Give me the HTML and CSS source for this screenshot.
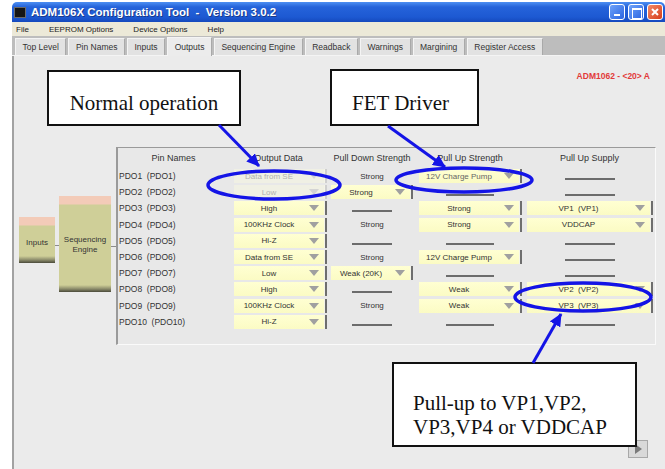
FILE: index.html
```html
<!DOCTYPE html>
<html>
  <head>
    <title>ADM106X Configuration Tool</title>
    <link rel="stylesheet" href="styles.css">
  </head>
  <body>
    <div class="window">
      <div class="titlebar">
        <span class="app-icon"></span>
        <span class="title">ADM106X Configuration Tool&nbsp; -&nbsp; Version 3.0.2</span>
        <div class="win-btns">
          <span class="wbtn min"></span>
          <span class="wbtn max"></span>
          <span class="wbtn close">
            <svg width="14" height="14" viewBox="0 0 14 14"><path d="M4 4 L10 10 M10 4 L4 10" stroke="#fff" stroke-width="2"/></svg>
          </span>
        </div>
      </div>

      <div class="menubar">
        <span class="menu-item">File</span>
        <span class="menu-item">EEPROM Options</span>
        <span class="menu-item">Device Options</span>
        <span class="menu-item">Help</span>
      </div>

      <div class="tabs">
        <span class="tab">Top Level</span>
        <span class="tab">Pin Names</span>
        <span class="tab">Inputs</span>
        <span class="tab active">Outputs</span>
        <span class="tab">Sequencing Engine</span>
        <span class="tab">Readback</span>
        <span class="tab">Warnings</span>
        <span class="tab">Margining</span>
        <span class="tab">Register Access</span>
      </div>

      <div class="content">
        <div class="chip-id">ADM1062 - &lt;20&gt; A</div>

        <div class="diagram">
          <div class="blocks">
            <div class="block inputs"><span>Inputs</span></div>
            <div class="link link-a"></div>
            <div class="block seq"><span>Sequencing<br>Engine</span></div>
            <div class="link link-b"></div>
          </div>

          <div class="panel">
            <div class="grid">
              <div class="head">Pin Names</div>
              <div class="head">Output Data</div>
              <div class="head">Pull Down Strength</div>
              <div class="head">Pull Up Strength</div>
              <div class="head">Pull Up Supply</div>

              <div class="pin">PDO1  (PDO1)</div>
              <div class="cell"><div class="dd w-out off"><span>Data from SE</span><i></i></div></div>
              <div class="cell"><span class="txt">Strong</span></div>
              <div class="cell"><div class="dd w-up dim"><span>12V Charge Pump</span><i></i></div></div>
              <div class="cell"><span class="line l-sup"></span></div>

              <div class="pin">PDO2  (PDO2)</div>
              <div class="cell"><div class="dd w-out off"><span>Low</span><i></i></div></div>
              <div class="cell"><div class="dd w-down"><span>Strong</span><i></i></div></div>
              <div class="cell"><span class="line l-up"></span></div>
              <div class="cell"><span class="line l-sup"></span></div>

              <div class="pin">PDO3  (PDO3)</div>
              <div class="cell"><div class="dd w-out"><span>High</span><i></i></div></div>
              <div class="cell"><span class="line l-down"></span></div>
              <div class="cell"><div class="dd w-up"><span>Strong</span><i></i></div></div>
              <div class="cell"><div class="dd w-sup"><span>VP1  (VP1)</span><i></i></div></div>

              <div class="pin">PDO4  (PDO4)</div>
              <div class="cell"><div class="dd w-out"><span>100KHz Clock</span><i></i></div></div>
              <div class="cell"><span class="txt">Strong</span></div>
              <div class="cell"><div class="dd w-up"><span>Strong</span><i></i></div></div>
              <div class="cell"><div class="dd w-sup"><span>VDDCAP</span><i></i></div></div>

              <div class="pin">PDO5  (PDO5)</div>
              <div class="cell"><div class="dd w-out"><span>Hi-Z</span><i></i></div></div>
              <div class="cell"><span class="line l-down"></span></div>
              <div class="cell"><span class="line l-up"></span></div>
              <div class="cell"><span class="line l-sup"></span></div>

              <div class="pin">PDO6  (PDO6)</div>
              <div class="cell"><div class="dd w-out"><span>Data from SE</span><i></i></div></div>
              <div class="cell"><span class="txt">Strong</span></div>
              <div class="cell"><div class="dd w-up"><span>12V Charge Pump</span><i></i></div></div>
              <div class="cell"><span class="line l-sup"></span></div>

              <div class="pin">PDO7  (PDO7)</div>
              <div class="cell"><div class="dd w-out"><span>Low</span><i></i></div></div>
              <div class="cell"><div class="dd w-down"><span>Weak (20K)</span><i></i></div></div>
              <div class="cell"><span class="line l-up"></span></div>
              <div class="cell"><span class="line l-sup"></span></div>

              <div class="pin">PDO8  (PDO8)</div>
              <div class="cell"><div class="dd w-out"><span>High</span><i></i></div></div>
              <div class="cell"><span class="line l-down"></span></div>
              <div class="cell"><div class="dd w-up"><span>Weak</span><i></i></div></div>
              <div class="cell"><div class="dd w-sup"><span>VP2  (VP2)</span><i></i></div></div>

              <div class="pin">PDO9  (PDO9)</div>
              <div class="cell"><div class="dd w-out"><span>100KHz Clock</span><i></i></div></div>
              <div class="cell"><span class="txt">Strong</span></div>
              <div class="cell"><div class="dd w-up"><span>Weak</span><i></i></div></div>
              <div class="cell"><div class="dd w-sup"><span>VP3  (VP3)</span><i></i></div></div>

              <div class="pin">PDO10  (PDO10)</div>
              <div class="cell"><div class="dd w-out"><span>Hi-Z</span><i></i></div></div>
              <div class="cell"><span class="line l-down"></span></div>
              <div class="cell"><span class="line l-up"></span></div>
              <div class="cell"><span class="line l-sup"></span></div>
            </div>
          </div>
        </div>

        <div class="next-btn"></div>
      </div>
    </div>

    <!-- annotation callouts drawn over the screenshot -->
    <div class="note note-normal">Normal operation</div>
    <div class="note note-fet">FET Driver</div>
    <div class="note note-pullup">Pull-up to VP1,VP2,<br>VP3,VP4 or VDDCAP</div>

    <svg class="marks" width="665" height="469" viewBox="0 0 665 469">
      <defs>
        <marker id="head" markerWidth="13" markerHeight="12" refX="12" refY="6" orient="auto" markerUnits="userSpaceOnUse">
          <path d="M0 0 L13 6 L0 12 Z" fill="#1414e6"/>
        </marker>
      </defs>
      <line x1="219" y1="125" x2="259" y2="166" stroke="#1414e6" stroke-width="3" marker-end="url(#head)"/>
      <line x1="388" y1="126" x2="445" y2="167" stroke="#1414e6" stroke-width="3" marker-end="url(#head)"/>
      <line x1="533" y1="363" x2="561" y2="314" stroke="#1414e6" stroke-width="3" marker-end="url(#head)"/>
      <ellipse cx="274" cy="185" rx="66" ry="14" fill="none" stroke="#1414e6" stroke-width="3.5"/>
      <ellipse cx="464" cy="180" rx="68" ry="12" fill="none" stroke="#1414e6" stroke-width="3.5"/>
      <ellipse cx="583" cy="297" rx="68" ry="14" fill="none" stroke="#1414e6" stroke-width="3.5"/>
    </svg>
  </body>
</html>
```

FILE: styles.css
```css
*{
    margin: 0;
    padding: 0;
    box-sizing: border-box;
}
body{
    position: relative;
    width: 665px;
    height: 469px;
    overflow: hidden;
    background: #fff;
    font-family: "Liberation Sans", Arial, sans-serif;
    color: #333;
}
.window{
    margin: 2px 0 0 12px;
    width: 653px;
    height: 467px;
    display: flex;
    flex-direction: column;
}

/* title bar */
.titlebar{
    height: 20px;
    display: flex;
    align-items: center;
    padding-left: 2px;
    color: #fff;
    background: linear-gradient(#4d8ff2, #2563da 25%, #1d59d2 75%, #1549bd);
    border-radius: 5px 5px 0 0;
}
.app-icon{
    width: 12px;
    height: 11px;
    margin-right: 5px;
    background: #151515;
    border: 1px solid #6a6a6a;
}
.title{
    font-size: 11.5px;
    font-weight: bold;
    text-shadow: 1px 1px 0 #1a3a8a;
}
.win-btns{
    margin-left: auto;
    display: flex;
    gap: 3px;
    padding-right: 2px;
}
.wbtn{
    position: relative;
    width: 16px;
    height: 16px;
    border: 1px solid #fff;
    border-radius: 3px;
    background: linear-gradient(135deg, #6ea2fa, #2a64e0);
}
.wbtn.min::after{
    content: "";
    position: absolute;
    left: 4px;
    bottom: 3px;
    width: 6px;
    height: 2px;
    background: #fff;
}
.wbtn.max::after{
    content: "";
    position: absolute;
    left: 3px;
    top: 3px;
    width: 8px;
    height: 8px;
    border: 1px solid #fff;
    border-top-width: 2px;
}
.wbtn.close{
    background: linear-gradient(135deg, #f38a68, #d63d1a);
}
.wbtn svg{
    display: block;
}

/* menu */
.menubar{
    height: 14px;
    display: flex;
    align-items: center;
    gap: 20px;
    padding-left: 4px;
    background: #ece9d8;
    font-size: 8px;
    color: #222;
}

/* tabs */
.tabs{
    height: 20px;
    display: flex;
    align-items: flex-end;
    gap: 2px;
    padding-left: 3px;
    background: #bdbdbd;
    border-bottom: 1px solid #f4f4f4;
}
.tab{
    height: 17px;
    display: flex;
    align-items: center;
    padding: 0 6.5px;
    font-size: 8.5px;
    color: #333;
    background: #e2e2e2;
    border: 1px solid #a9a9a9;
    border-bottom: none;
    border-top-color: #f4f4f4;
    border-left-color: #f4f4f4;
}
.tab.active{
    height: 19px;
    background: #ececec;
    margin-bottom: -1px;
}

/* content */
.content{
    flex: 1;
    display: flex;
    flex-direction: column;
    background: #ebebeb;
    border-left: 2px solid #a2a2a2;
}
.chip-id{
    align-self: flex-end;
    margin: 14px 15px 0 0;
    font-size: 8.5px;
    font-weight: bold;
    line-height: 12px;
    color: #e23a3a;
}
.diagram{
    display: flex;
    margin-top: 65px;
}
.blocks{
    width: 102px;
    display: flex;
    align-items: flex-start;
    padding-left: 5px;
}
.block{
    display: flex;
    align-items: center;
    justify-content: center;
    text-align: center;
    font-size: 8px;
    line-height: 10px;
    color: #333;
    background: linear-gradient(#f3cbb8 0, #f3cbb8 8px, #cfcf98 9px, #cfcf98 calc(100% - 7px), #8a8a6a calc(100% - 3px), #4a4a3a);
}
.block.inputs{
    width: 36px;
    height: 46px;
    margin-top: 70px;
    padding-top: 6px;
}
.block.seq{
    width: 52px;
    height: 96px;
    margin-top: 49px;
    padding-top: 2px;
}
.link{
    height: 1px;
    background: #8c8c8c;
}
.link-a{
    width: 4px;
    margin-top: 98px;
}
.link-b{
    width: 5px;
    margin-top: 99px;
}
.panel{
    width: 540px;
    padding-bottom: 14px;
    background: #e8e8e8;
    border: 1px solid #fafafa;
    border-top-color: #9a9a9a;
    border-left: 2px solid #9a9a9a;
}
.grid{
    display: grid;
    grid-template-columns: 111px 99px 88px 108px 131px;
    grid-template-rows: 20px repeat(10, 16.2px);
    align-items: center;
}
.head{
    text-align: center;
    font-size: 9px;
    color: #333;
}
.pin{
    padding-left: 1px;
    white-space: pre;
    font-size: 8.5px;
    color: #333;
}
.cell{
    height: 100%;
    display: flex;
    align-items: center;
    justify-content: center;
}
.txt{
    font-size: 8px;
    color: #333;
}

/* drop-down boxes */
.dd{
    position: relative;
    height: 14px;
    display: flex;
    align-items: center;
    padding-right: 20px;
    background: linear-gradient(#ffffd2, #fbfbc4);
    border-right: 2px solid #6e6e6e;
    box-shadow: inset -1px 0 0 #f4f4e8;
    font-size: 8px;
    color: #333;
    white-space: pre;
}
.dd span{
    flex: 1;
    text-align: center;
}
.dd i{
    position: absolute;
    right: 6px;
    top: 4px;
    border-left: 5px solid transparent;
    border-right: 5px solid transparent;
    border-top: 6px solid #a0a0a0;
}
.dd.off{
    background: #f0f0e4;
    color: #b0b0b0;
    border-right-color: #cfcfcf;
}
.dd.off i{
    border-top-color: #d4d4d4;
}
.dd.dim{
    color: #666;
}
.w-out{ width: 93px; margin-left: 3px; }
.w-down{ width: 82px; }
.w-up{ width: 103px; }
.w-sup{ width: 126px; }

.line{
    height: 2px;
    margin-top: 6px;
    background: #6c6c6c;
}
.l-down{ width: 40px; }
.l-up{ width: 48px; }
.l-sup{ width: 50px; }

.next-btn{
    position: relative;
    align-self: flex-end;
    margin: auto 17px 11px 0;
    width: 20px;
    height: 18px;
    background: #d9d9d9;
    border: 1px solid #a8a8a8;
}
.next-btn::after{
    content: "";
    position: absolute;
    left: 6px;
    top: 3px;
    border-top: 5px solid transparent;
    border-bottom: 5px solid transparent;
    border-left: 7px solid #7a7a7a;
}

/* annotation callouts */
.note{
    position: absolute;
    background: #fff;
    border: 2px solid #111;
    font-family: "Liberation Serif", "Times New Roman", serif;
    color: #111;
}
.note-normal{
    left: 47px;
    top: 70px;
    width: 194px;
    height: 56px;
    padding-top: 19px;
    text-align: center;
    font-size: 21px;
}
.note-fet{
    left: 330px;
    top: 69px;
    width: 149px;
    height: 57px;
    padding: 20px 0 0 20px;
    font-size: 21px;
}
.note-pullup{
    left: 392px;
    top: 362px;
    width: 245px;
    height: 85px;
    padding: 27px 0 0 19px;
    font-size: 21px;
    line-height: 24px;
}
.marks{
    position: absolute;
    left: 0;
    top: 0;
    pointer-events: none;
}
```
